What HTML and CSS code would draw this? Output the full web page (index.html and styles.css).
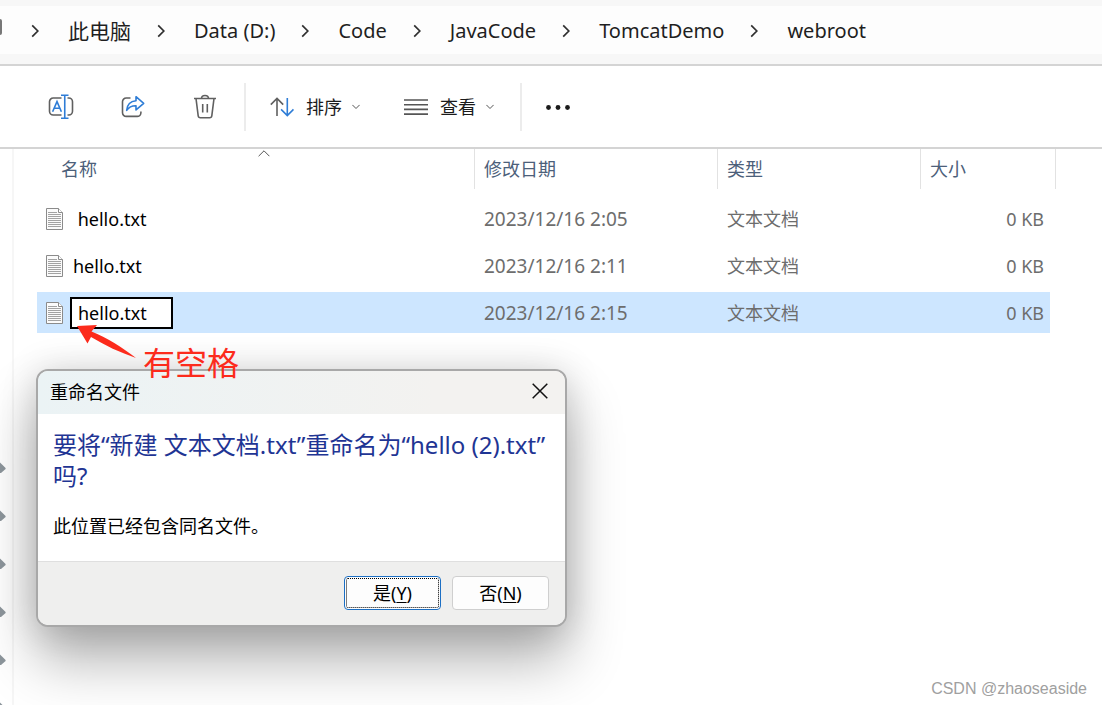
FILE: index.html
```html
<!DOCTYPE html>
<html lang="zh-CN">
<head>
<meta charset="utf-8">
<title>webroot</title>
<link rel="stylesheet" href="styles.css">
</head>
<body>
<svg class="defs" aria-hidden="true">
  <symbol id="crumb" viewBox="0 0 8 14"><path d="M1.2 1.4 6.8 7l-5.6 5.6" fill="none" stroke="#303030" stroke-width="1.7"/></symbol>
  <symbol id="down" viewBox="0 0 8 6"><path d="M.4.9 4 4.5 7.6.9" fill="none" stroke="#555" stroke-width="1"/></symbol>
  <symbol id="pin" viewBox="0 0 6 12"><path d="M0 .5v10.500h1L5.600 7V6z" fill="#8d969c"/></symbol>
  <symbol id="file" viewBox="0 0 17 22">
    <path d="M.5.5h12l4 4v17H.5z" fill="#fbfbfb" stroke="#8b8b8b"/>
    <path d="M12.5.5v4h4" fill="#fff" stroke="#8b8b8b"/>
    <path d="M2 4.5h9M2 6.5h13M2 8.5h13M2 10.5h13M2 12.5h13M2 14.5h13M2 16.5h13M2 18.5h13" stroke="#a3a3a3" stroke-width="1"/>
  </symbol>
</svg>
<div class="window">
  <nav class="address" aria-label="路径">
    <div class="address-inner">
      <span class="edge"></span>
      <ol class="crumbs">
        <li><svg class="crumb-icon"><use href="#crumb"/></svg><a class="root" href="#">此电脑</a></li>
        <li><svg class="crumb-icon"><use href="#crumb"/></svg><a href="#">Data (D:)</a></li>
        <li><svg class="crumb-icon"><use href="#crumb"/></svg><a href="#">Code</a></li>
        <li><svg class="crumb-icon"><use href="#crumb"/></svg><a href="#">JavaCode</a></li>
        <li><svg class="crumb-icon"><use href="#crumb"/></svg><a href="#">TomcatDemo</a></li>
        <li><svg class="crumb-icon"><use href="#crumb"/></svg><a href="#">webroot</a></li>
      </ol>
    </div>
  </nav>

  <div class="toolbar">
    <div class="tools">
      <button class="tool" aria-label="重命名">
        <svg width="26" height="26" viewBox="0 0 26 26" fill="none" stroke-width="1.6">
          <path d="M13.5 4H5.2A3.7 3.7 0 0 0 1.5 7.7v9.6A3.7 3.7 0 0 0 5.2 21h8.3M19.500 4h1.300a3.700 3.700 0 0 1 3.700 3.700v9.600a3.700 3.700 0 0 1-3.700 3.700h-1.300" stroke="#606060"/>
          <path d="M13 1.300h7.500M13 24.300h7.500M16.750 1.300v23M4.600 17.700 9 7.600l4.400 10.100M6 14.300h6" stroke="#2f7dd6"/>
        </svg>
      </button>
      <button class="tool" aria-label="共享">
        <svg width="26" height="26" viewBox="0 0 26 26" fill="none" stroke-width="1.600" stroke-linejoin="round">
          <path d="M10.500 4H6.200a3.700 3.700 0 0 0-3.700 3.700v11A3.700 3.700 0 0 0 6.200 22.400h11a3.700 3.700 0 0 0 3.700-3.700V17.500" stroke="#606060"/>
          <path d="M16 2.700 23.700 9.300 16 15.900v-4.200c-4.300-.1-7.200 1.400-9.300 4.600.4-5.500 3.400-9 9.300-9.600z" stroke="#2f7dd6"/>
        </svg>
      </button>
      <button class="tool" aria-label="删除">
        <svg width="26" height="26" viewBox="0 0 26 26" fill="none" stroke="#606060" stroke-width="1.600">
          <path d="M2 4.500h22M9.500 4.500a3.500 3 0 0 1 7 0M4 4.500l2.200 17.300a2.200 2.200 0 0 0 2.200 2h9.200a2.200 2.200 0 0 0 2.200-2L22 4.500M10.700 10v8.500M15.300 10v8.500"/>
        </svg>
      </button>
    </div>
    <span class="divider"></span>
    <div class="menus">
      <button class="menu">
        <svg width="24" height="20" viewBox="0 0 24 20" fill="none" stroke-width="1.600">
          <path d="M7 19V1.500M.8 7.600 7 1.400l6.200 6.200" stroke="#606060"/>
          <path d="M17.300 1v17.500M11.100 12.400l6.200 6.200 6.200-6.200" stroke="#2f7dd6"/>
        </svg>
        <span>排序</span>
        <svg width="8" height="6"><use href="#down"/></svg>
      </button>
      <button class="menu">
        <svg width="24" height="20" viewBox="0 0 24 20" stroke="#555" stroke-width="1.600"><path d="M0 3h24M0 7.700h24M0 12.400h24M0 17.100h24"/></svg>
        <span>查看</span>
        <svg width="8" height="6"><use href="#down"/></svg>
      </button>
    </div>
    <span class="divider"></span>
    <button class="more" aria-label="更多">
      <svg width="24" height="6" viewBox="0 0 24 6" fill="#1b1b1b"><circle cx="2.500" cy="3.500" r="2.400"/><circle cx="12" cy="3.500" r="2.400"/><circle cx="21.500" cy="3.500" r="2.400"/></svg>
    </button>
  </div>

  <div class="main">
    <aside class="sidebar">
      <svg class="pin"><use href="#pin"/></svg>
      <svg class="pin"><use href="#pin"/></svg>
      <svg class="pin"><use href="#pin"/></svg>
      <svg class="pin"><use href="#pin"/></svg>
      <svg class="pin"><use href="#pin"/></svg>
      <svg class="pin"><use href="#pin"/></svg>
    </aside>
    <main class="pane">
      <table class="files">
        <colgroup><col><col class="col-date"><col class="col-type"><col class="col-size"></colgroup>
        <thead>
          <tr>
            <th class="name-head">名称<svg class="sort-mark" width="12" height="7" viewBox="0 0 12 7"><path d="M.6 6.200 6 .8l5.400 5.400" fill="none" stroke="#555"/></svg></th>
            <th>修改日期</th><th>类型</th><th>大小</th>
          </tr>
        </thead>
        <tbody>
          <tr>
            <td><div class="name"><svg class="file-icon"><use href="#file"/></svg><span class="label"> hello.txt</span></div></td>
            <td class="date">2023/12/16 2:05</td><td>文本文档</td><td class="size">0 KB</td>
          </tr>
          <tr>
            <td><div class="name"><svg class="file-icon"><use href="#file"/></svg><span class="label">hello.txt</span></div></td>
            <td class="date">2023/12/16 2:11</td><td>文本文档</td><td class="size">0 KB</td>
          </tr>
          <tr class="selected">
            <td><div class="name"><svg class="file-icon"><use href="#file"/></svg><input class="rename" type="text" value="hello.txt" aria-label="文件名"></div></td>
            <td class="date">2023/12/16 2:15</td><td>文本文档</td><td class="size">0 KB</td>
          </tr>
        </tbody>
      </table>
    </main>
  </div>

  <section class="dialog" role="dialog" aria-labelledby="dialog-title">
    <header class="dialog-head">
      <span id="dialog-title">重命名文件</span>
      <button class="close" aria-label="关闭"><svg width="16" height="16" viewBox="0 0 16 16"><path d="M.7.7l14.600 14.600M15.300.7.7 15.300" stroke="#111" stroke-width="1.500"/></svg></button>
    </header>
    <div class="dialog-body">
      <h1>要将“新建 文本文档.txt”重命名为“hello (2).txt”吗?</h1>
      <p>此位置已经包含同名文件。</p>
    </div>
    <footer class="dialog-foot">
      <button class="btn default">是(<u>Y</u>)</button>
      <button class="btn">否(<u>N</u>)</button>
    </footer>
  </section>

  <div class="note">
    <svg width="60" height="34" viewBox="0 0 60 34"><path d="M0 1 20 0 14.500 6.500C30 13 45 22 59 33 43 27.500 28 20.500 14 12L10.500 18.500z" fill="#fc2b1c"/></svg>
    <span>有空格</span>
  </div>
  <span class="watermark">CSDN @zhaoseaside</span>
</div>
</body>
</html>
```
FILE: styles.css
```css
* { box-sizing: border-box; }

body {
  margin: 0;
  background: #fff;
  color: #1b1b1b;
  font-family: "Noto Sans", "Noto Sans CJK SC", sans-serif;
  font-size: 18px;
}

button {
  padding: 0;
  border: 0;
  background: none;
  color: inherit;
  font: inherit;
}

svg { display: block; flex: none; }
.defs { position: absolute; width: 0; height: 0; }

.window {
  position: relative;
  display: flex;
  flex-direction: column;
  height: 100vh;
  overflow: hidden;
}

.address {
  padding: 6px 0 10px;
  border-bottom: 2px solid #d4d4d4;
  background: #f7f7f7;
}
.address-inner {
  display: flex;
  align-items: center;
  height: 48px;
  padding-top: 2px;
  background: #fdfdfd;
}
.edge { width: 2px; height: 16px; margin: 0 29px 8px 0; background: #777; border-radius: 0 2px 2px 0; }
.crumbs {
  display: flex;
  gap: 26px;
  margin: 0;
  padding: 0;
  list-style: none;
}
.crumbs li { display: flex; align-items: center; gap: 29px; }
.crumbs a {
  color: #1f1f1f;
  font-size: 20px;
  line-height: 28px;
  text-decoration: none;
  white-space: nowrap;
}
.crumbs .root { font-size: 21px; }
.crumb-icon { width: 8px; height: 14px; }

.toolbar {
  display: flex;
  align-items: center;
  height: 83px;
  padding-left: 37px;
  border-bottom: 2px solid #d4d4d4;
}
.tools { display: flex; gap: 24px; margin-right: 15px; }
.tool { display: grid; place-items: center; width: 48px; height: 48px; }
.divider { width: 2px; height: 48px; background: #ececec; }
.menus { display: flex; gap: 44px; margin: 0 26px 0 24px; }
.menu { display: flex; align-items: center; gap: 10px; }
.menu span { margin-left: 2px; line-height: 24px; }
.more { margin-left: 24px; }

.main { display: flex; flex: 1; min-height: 0; }
.sidebar {
  display: flex;
  flex-direction: column;
  gap: 36px;
  width: 14px;
  padding-top: 313px;
  border-right: 2px solid #f6f6f6;
  overflow: hidden;
}
.pin { width: 6px; height: 12px; }
.pane { flex: 1; padding: 0 46px 0 23px; }

.files {
  width: 100%;
  border-spacing: 0;
  table-layout: fixed;
  color: #6d6d6d;
}
.col-date { width: 243px; }
.col-type { width: 203px; }
.col-size { width: 135px; }
.files th {
  height: 40px;
  padding: 0 9px 2px;
  border-right: 1px solid #e2e2e2;
  color: #4c607a;
  font-weight: 400;
  text-align: left;
}
.files .name-head { position: relative; padding-left: 24px; }
.sort-mark { position: absolute; top: 1px; left: calc(50% + 2px); }
.files tbody::before { content: ""; display: block; height: 6px; }
.files td {
  height: 47px;
  padding: 0 9px;
  border: solid transparent;
  border-width: 3px 0;
  background-clip: padding-box;
  line-height: 24px;
}
.files .date { font-size: 19px; }
.files .size { padding-right: 6px; border-right-width: 6px; text-align: right; }
.selected td { background-color: #cde6ff; }
.selected td:first-child { border-radius: 3px 0 0 3px; }
.name { display: flex; align-items: center; color: #000; }
.file-icon { width: 17px; height: 22px; }
.label { margin-left: 10px; white-space: pre; }
.rename {
  width: 103px;
  height: 32px;
  margin-left: 7px;
  padding: 0 6px;
  border: 2px solid #000;
  background: #fff;
  color: #000;
  font: inherit;
  outline: 0;
}

.dialog {
  position: absolute;
  top: 369px;
  left: 36px;
  width: 531px;
  border: 2px solid #a8a8a8;
  border-radius: 12px;
  background: #fff;
  background-clip: padding-box;
  box-shadow: 0 34px 56px rgba(0, 0, 0, .3), 0 2px 36px rgba(0, 0, 0, .16);
  color: #000;
}
.dialog-head {
  display: flex;
  align-items: center;
  justify-content: space-between;
  height: 43px;
  padding: 0 17px 4px 12px;
  border-radius: 10px 10px 0 0;
  background: linear-gradient(90deg, #ebf3f5, #f3f2f0 75%);
}
.dialog-body { padding: 15px 14px 21px 15px; }
.dialog h1 {
  margin: 0;
  color: #1f3594;
  font-size: 24px;
  font-weight: 400;
  line-height: 31px;
}
.dialog p { margin: 22px 0 0; line-height: 27px; }
.dialog-foot {
  display: flex;
  justify-content: flex-end;
  gap: 11px;
  padding: 14px 16px 15px;
  border-top: 1px solid #dfdfdf;
  border-radius: 0 0 10px 10px;
  background: #efefee;
}
.btn {
  width: 97px;
  height: 34px;
  padding-bottom: 2px;
  border: 1px solid #cfcfcf;
  border-radius: 4px;
  background: #fdfdfd;
}
.btn.default {
  border-color: #1c6fc4;
  outline: 1px dotted #000;
  outline-offset: -3px;
}
.btn u { text-underline-offset: 2px; }

.note {
  position: absolute;
  top: 325px;
  left: 77px;
  display: flex;
  color: #fc2b1c;
  font-size: 32px;
}
.note span { margin: 15px 0 0 6px; line-height: 46px; }

.watermark {
  position: absolute;
  right: 15px;
  bottom: 6px;
  color: #a0a0a0;
  font: 16px/20px "Liberation Sans", Arial, sans-serif;
}
```
